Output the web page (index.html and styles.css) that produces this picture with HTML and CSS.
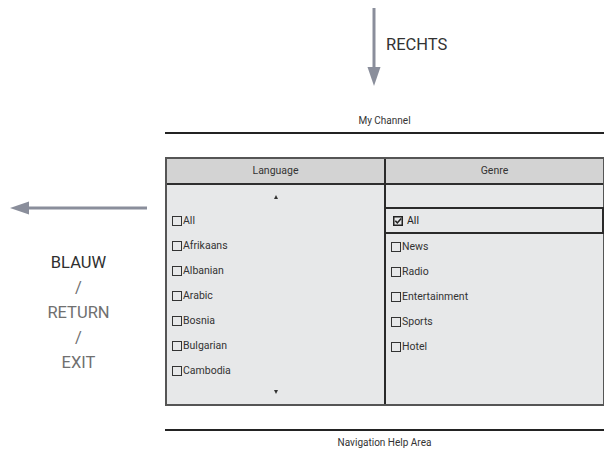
FILE: index.html
```html
<!DOCTYPE html>
<html>
<head>
    <title>My Channel</title>
    <meta charset="utf-8" />
    <link rel="stylesheet" href="styles.css">
</head>
<body>
    <div id="wrapper">
        <header class="top">
            <svg class="down-arrow" width="14" height="78" viewBox="0 0 14 78">
                <line x1="7" y1="0" x2="7" y2="61" stroke="#8a8e9b" stroke-width="3" />
                <polygon points="0.5,59 13.5,59 7,78" fill="#8a8e9b" />
            </svg>
            <span class="key-right">RECHTS</span>
        </header>
        <main class="main">
            <div class="aside">
                <svg class="left-arrow" width="147" height="14" viewBox="0 0 147 14">
                    <polygon points="10,7 29,0.5 29,13.5" fill="#8a8e9b" />
                    <line x1="27" y1="7" x2="147" y2="7" stroke="#8a8e9b" stroke-width="3" />
                </svg>
                <div class="keys">
                    <div class="key-dark">BLAUW</div>
                    <div>/</div>
                    <div>RETURN</div>
                    <div>/</div>
                    <div>EXIT</div>
                </div>
            </div>
            <div class="panel">
                <div class="caption">My Channel</div>
                <div class="rule"></div>
                <div class="grid">
                    <div class="col">
                        <div class="head">Language</div>
                        <div class="body">
                            <div class="scroll"><span class="tri-up"></span></div>
                            <div class="item"><span class="box"></span>All</div>
                            <div class="item"><span class="box"></span>Afrikaans</div>
                            <div class="item"><span class="box"></span>Albanian</div>
                            <div class="item"><span class="box"></span>Arabic</div>
                            <div class="item"><span class="box"></span>Bosnia</div>
                            <div class="item"><span class="box"></span>Bulgarian</div>
                            <div class="item"><span class="box"></span>Cambodia</div>
                            <div class="scroll bottom"><span class="tri-down"></span></div>
                        </div>
                    </div>
                    <div class="col right">
                        <div class="head">Genre</div>
                        <div class="body">
                            <div class="scroll gap"></div>
                            <div class="item selected">
                                <svg class="check" width="10" height="10" viewBox="0 0 10 10">
                                    <rect x="0.75" y="0.75" width="8.5" height="8.5" fill="none" stroke="#222" stroke-width="1.5" />
                                    <polyline points="2.3,4.8 4.3,6.9 8.2,2.4" fill="none" stroke="#222" stroke-width="1.6" />
                                </svg>All
                            </div>
                            <div class="item"><span class="box"></span>News</div>
                            <div class="item"><span class="box"></span>Radio</div>
                            <div class="item"><span class="box"></span>Entertainment</div>
                            <div class="item"><span class="box"></span>Sports</div>
                            <div class="item"><span class="box"></span>Hotel</div>
                        </div>
                    </div>
                </div>
                <div class="rule bottom-rule"></div>
                <div class="caption help">Navigation Help Area</div>
            </div>
        </main>
    </div>
</body>
</html>
```

FILE: styles.css
```css
body {
    margin: 0;
    background-color: white;
    font-family: Roboto, "Liberation Sans", sans-serif;
    color: #333;
}

#wrapper {
    width: 604px;
    height: 453px;
    overflow: hidden;
}

/* top key hint */
.top {
    height: 110px;
    box-sizing: border-box;
    padding: 8px 0 0 367px;
    display: flex;
    align-items: flex-start;
}

.down-arrow {
    display: block;
}

.key-right {
    margin: 27px 0 0 5px;
    font-size: 16.5px;
    line-height: 20px;
    color: #333;
}

.main {
    display: flex;
}

/* left key hint */
.aside {
    width: 165px;
    flex: none;
}

.left-arrow {
    display: block;
    margin-top: 91px;
}

.keys {
    width: 157px;
    margin-top: 35px;
    text-align: center;
    font-size: 16.5px;
    line-height: 25px;
    color: #707070;
}

.key-dark {
    color: #2f2f2f;
}

/* channel panel */
.panel {
    flex: 1;
}

.caption {
    height: 22px;
    line-height: 22px;
    text-align: center;
    font-size: 10px;
    color: #333;
}

.caption.help {
    height: 22px;
    line-height: 24px;
}

.rule {
    border-top: 2px solid #232323;
}

.bottom-rule {
    margin-top: 23px;
}

.grid {
    margin-top: 23px;
    display: grid;
    grid-template-columns: 217px 1fr;
    border: 2px solid #555;
    border-right-width: 1px;
}

.col.right {
    border-left: 2px solid #2a2a2a;
}

.head {
    height: 24px;
    line-height: 24px;
    text-align: center;
    font-size: 10.5px;
    background-color: #d3d3d3;
    border-bottom: 2px solid #2e2e2e;
}

.body {
    height: 219px;
    background-color: #e7e8e9;
}

.scroll {
    height: 23px;
    display: flex;
    align-items: center;
    justify-content: center;
}

.scroll.gap {
    height: 22px;
}

.scroll.bottom {
    height: 17px;
}

.tri-up {
    border-left: 2.5px solid transparent;
    border-right: 2.5px solid transparent;
    border-bottom: 4px solid #333;
}

.tri-down {
    border-left: 2.5px solid transparent;
    border-right: 2.5px solid transparent;
    border-top: 4px solid #333;
}

.item {
    height: 25px;
    display: flex;
    align-items: center;
    padding-left: 5px;
    font-size: 10.5px;
    color: #333;
}

.box {
    width: 8px;
    height: 8px;
    border: 1.5px solid #333;
    margin-right: 1px;
    flex: none;
}

.item.selected {
    height: 27px;
    box-sizing: border-box;
    margin: 0 -1px 0 -2px;
    padding-left: 7px;
    border: 2px solid #2a2a2a;
    color: #222;
}

.check {
    margin-right: 4px;
    flex: none;
}
```
